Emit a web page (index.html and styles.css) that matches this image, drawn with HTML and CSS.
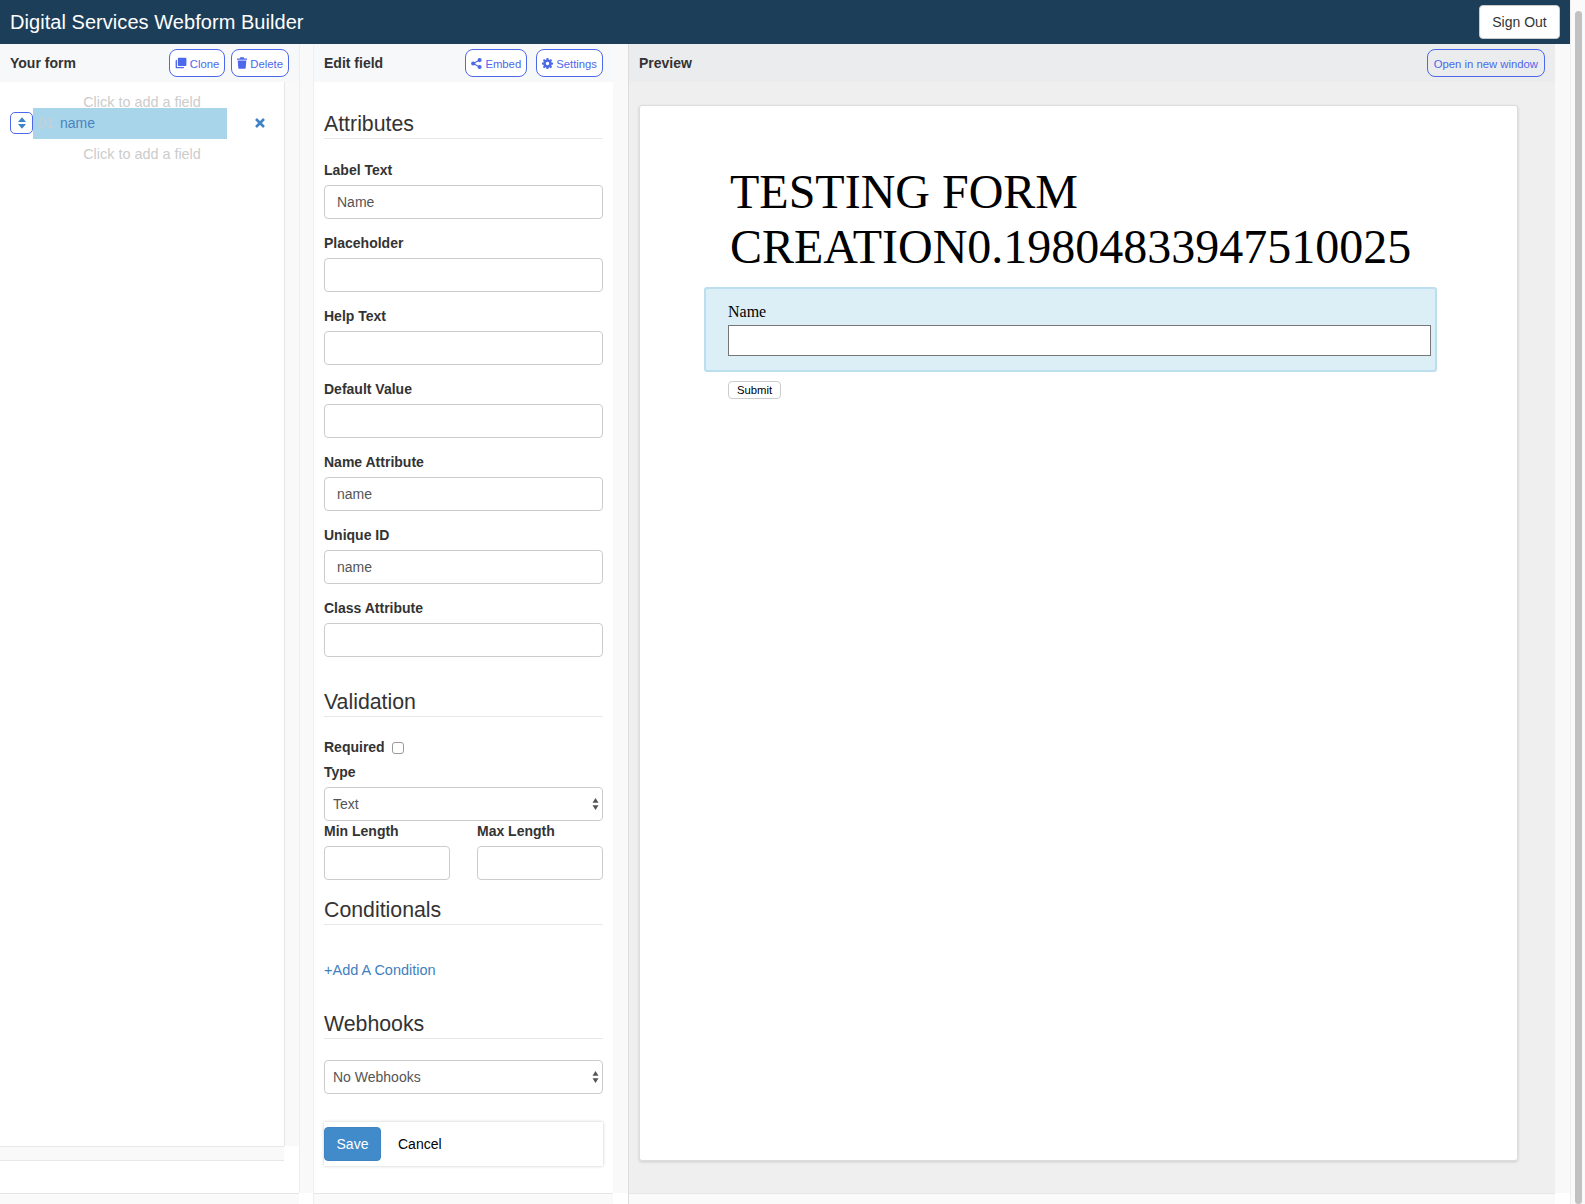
FILE: index.html
```html
<!DOCTYPE html>
<html lang="en">
<head>
<meta charset="utf-8">
<title>Digital Services Webform Builder</title>
<link rel="stylesheet" href="styles.css">
</head>
<body>
<div class="app">
  <header class="topbar">
    <div class="brand">Digital Services Webform Builder</div>
    <button class="signout">Sign Out</button>
  </header>
  <main class="workspace">
    <section class="col col-form">
      <div class="col-head">
        <span class="col-title">Your form</span>
        <div class="tools">
          <a class="pill"><svg class="ico" viewBox="0 0 16 16"><path d="M5 1h9a1.200 1.200 0 0 1 1.200 1.200v8.600A1.200 1.200 0 0 1 14 12H5a1.200 1.200 0 0 1-1.200-1.200V2.200A1.200 1.200 0 0 1 5 1z"/><path d="M2.600 4v8.200c0 .7.500 1.200 1.200 1.200H12v.6A1.200 1.200 0 0 1 10.800 15H2A1.200 1.200 0 0 1 .8 13.800V5.200A1.200 1.200 0 0 1 2 4z"/></svg>Clone</a>
          <a class="pill"><svg class="ico ico-trash" viewBox="1 0 14 16"><path d="M5.600 0h4.800l.8 1.600H15v1.800H1V1.600h3.800zM2 4.400h12l-.8 10.400a1.200 1.200 0 0 1-1.200 1.200H4a1.200 1.200 0 0 1-1.200-1.200z"/></svg>Delete</a>
        </div>
      </div>
      <div class="form-body">
        <div class="field-list">
          <div class="slot slot-top">Click to add a field</div>
          <div class="field-row">
            <button class="sort"><svg class="sort-ico" viewBox="0 0 9 13"><path d="M4.500 0L9 5.500H0zM4.500 13L0 7.500h9z"/></svg></button>
            <div class="field-chip"><span class="num">01</span><span class="fname">name</span></div>
            <svg class="remove" viewBox="0 0 12 12"><path d="M2 2l8 8M10 2l-8 8"/></svg>
          </div>
          <div class="slot slot-bottom">Click to add a field</div>
        </div>
        <div class="rail"></div>
      </div>
      <div class="strip"></div>
      <div class="blank"></div>
      <div class="col-foot"></div>
    </section>
    <div class="gutter gutter-first"><div class="gutter-fill"></div><div class="gutter-foot"></div></div>
    <section class="col col-edit">
      <div class="col-head">
        <span class="col-title">Edit field</span>
        <div class="tools tools-wide">
          <a class="pill"><svg class="ico ico-small" viewBox="0 0 16 16"><circle cx="12.500" cy="3" r="3"/><circle cx="12.500" cy="13" r="3"/><circle cx="3.200" cy="8" r="3"/><path class="ico-line" d="M12.500 3L3.200 8l9.300 5"/></svg>Embed</a>
          <a class="pill"><svg class="ico ico-small" viewBox="0 0 16 16"><path fill-rule="evenodd" d="M6.700 0h2.600l.4 2.200 1.300.6 1.900-1.300 1.800 1.800-1.300 1.900.6 1.300 2 .4v2.600l-2 .4-.6 1.300 1.300 1.900-1.800 1.800-1.900-1.300-1.300.6-.4 2H6.700l-.4-2-1.300-.6-1.900 1.300-1.800-1.800 1.300-1.900-.6-1.300-2-.4V6.900l2-.4.6-1.300-1.300-1.900 1.800-1.800L5 2.800l1.300-.6zM8 5.500a2.500 2.500 0 1 0 0 5 2.500 2.500 0 0 0 0-5z"/></svg>Settings</a>
        </div>
      </div>
      <div class="edit-body">
        <h4 class="sec sec-first">Attributes</h4>
        <div class="group"><label class="lbl">Label Text</label><input class="ctl" value="Name"></div>
        <div class="group"><label class="lbl">Placeholder</label><input class="ctl"></div>
        <div class="group"><label class="lbl">Help Text</label><input class="ctl"></div>
        <div class="group"><label class="lbl">Default Value</label><input class="ctl"></div>
        <div class="group"><label class="lbl">Name Attribute</label><input class="ctl" value="name"></div>
        <div class="group"><label class="lbl">Unique ID</label><input class="ctl" value="name"></div>
        <div class="group"><label class="lbl">Class Attribute</label><input class="ctl"></div>

        <h4 class="sec sec-validation">Validation</h4>
        <div class="req"><label class="lbl">Required</label><span class="check"></span></div>
        <label class="lbl lbl-type">Type</label>
        <div class="select-wrap">
          <select class="sel"><option>Text</option></select>
          <svg class="carets" viewBox="0 0 8 14"><path d="M4 0l3.500 5.500h-7zM4 14L.5 8.500h7z"/></svg>
        </div>
        <div class="two">
          <div><label class="lbl">Min Length</label><input class="ctl"></div>
          <div><label class="lbl">Max Length</label><input class="ctl"></div>
        </div>

        <h4 class="sec sec-cond">Conditionals</h4>
        <a class="add-cond">+Add A Condition</a>

        <h4 class="sec sec-hooks">Webhooks</h4>
        <div class="select-wrap">
          <select class="sel"><option>No Webhooks</option></select>
          <svg class="carets" viewBox="0 0 8 14"><path d="M4 0l3.500 5.500h-7zM4 14L.5 8.500h7z"/></svg>
        </div>
        <div class="actions">
          <button class="save">Save</button>
          <a class="cancel">Cancel</a>
        </div>
      </div>
      <div class="col-foot"></div>
    </section>
    <div class="gutter"><div class="gutter-fill"></div><div class="gutter-foot"></div></div>
    <section class="col col-preview">
      <div class="col-head">
        <span class="col-title">Preview</span>
        <a class="pill">Open in new window</a>
      </div>
      <div class="preview-body">
        <div class="sheet">
          <h1 class="form-title">TESTING FORM CREATION0.19804833947510025</h1>
          <div class="preview-field">
            <label class="pv-label">Name</label>
            <input class="pv-input">
          </div>
          <button class="pv-submit">Submit</button>
        </div>
      </div>
      <div class="col-foot"></div>
    </section>
    <div class="gutter"><div class="gutter-fill"></div><div class="gutter-foot"></div></div>
  </main>
</div>
<div class="scrollbar"><div class="thumb"></div></div>
</body>
</html>
```
FILE: styles.css
```css
* { box-sizing: border-box; }
html, body { margin: 0; height: 100%; }
body {
  display: flex;
  height: 1204px;
  overflow: hidden;
  background: #fff;
  font-family: "Liberation Sans", Arial, sans-serif;
  font-size: 14px;
  color: #333;
}
.app { width: 1570px; display: flex; flex-direction: column; }
.topbar {
  height: 44px;
  flex: none;
  background: #1d3e58;
  display: flex;
  align-items: center;
  justify-content: space-between;
  padding: 0 10px;
}
.brand { color: #fff; font-size: 20px; letter-spacing: .05px; }
.signout {
  width: 81px; height: 34px;
  background: #fff;
  border: 1px solid #ccc;
  border-radius: 4px;
  font: 14px "Liberation Sans", Arial, sans-serif;
  color: #333;
  padding: 0;
}
.workspace { flex: 1; display: flex; min-height: 0; }
.col { display: flex; flex-direction: column; width: 299px; flex: none; }
.col-edit { width: 300px; border-left: 1px solid #efefef; }
.col-preview { width: 927px; flex: none; border-left: 1px solid #dcdcdc; }
.col-preview .col-head { background: #ebecee; }
.col-head {
  height: 38px;
  flex: none;
  background: #f7f8fa;
  display: flex;
  align-items: center;
  justify-content: space-between;
  padding: 0 10px;
}
.col-title { font-weight: 700; font-size: 14px; color: #333; }
.tools { display: flex; gap: 6px; }
.tools-wide { gap: 9px; }
.pill {
  display: inline-flex;
  align-items: center;
  gap: 3px;
  height: 28px;
  padding: 2px 5px 0;
  border: 1px solid #4d68ea;
  border-radius: 8px;
  background: #fff;
  color: #4d68ea;
  font-size: 11.3px;
  white-space: nowrap;
}
.col-preview .pill { padding: 2px 6px 0; background: transparent; }
.ico { width: 12px; height: 12px; fill: #4d68ea; margin-top: -2px; }
.ico-trash { width: 10px; }
.ico-small { width: 11px; height: 11px; }
.ico-line { fill: none; stroke: #4d68ea; stroke-width: 1.600; }
.form-body { flex: 1; display: flex; min-height: 0; }
.field-list { width: 285px; background: #fff; border-right: 1px solid #e6e6e6; padding-top: 10px; }
.rail { flex: 1; background: #f9f9f9; }
.slot { width: 284px; text-align: center; color: #ccc; line-height: 20px; font-size: 14.4px; }
.slot-top { margin-bottom: -4px; }
.slot-bottom { margin-top: 5px; }
.field-row { display: flex; align-items: center; padding-left: 10px; height: 31px; }
.sort {
  width: 23px; height: 22px;
  margin-bottom: 2px;
  padding: 0;
  background: #fff;
  border: 1px solid #4d68ea;
  border-radius: 5px;
  display: flex; align-items: center; justify-content: center;
}
.sort-ico { width: 8px; height: 12px; fill: #3f83c6; }
.field-chip {
  width: 194px; height: 31px;
  background: #a8d5ea;
  display: flex; align-items: center;
  padding: 0 0 2px 5px;
}
.num { color: #c6cfd4; width: 22px; }
.fname { color: #4a84bf; }
.remove { width: 12px; height: 12px; margin: 0 0 2px 27px; stroke: #3f83c6; stroke-width: 2.600; fill: none; }
.strip {
  width: 284px; height: 15px; flex: none;
  background: #f9f9f9;
  border-top: 1px solid #e8e8e8;
  border-bottom: 1px solid #e8e8e8;
}
.blank { height: 32px; flex: none; background: #fff; }
.col-foot { height: 11px; flex: none; background: #fafafa; border-top: 1px solid #e6e6e6; }
.gutter { width: 15px; flex: none; display: flex; flex-direction: column; }
.gutter-first { width: 14px; }
.gutter-fill { flex: 1; background: #f9f9f9; }
.gutter-foot { height: 11px; background: #fff; }
.gutter-first .gutter-fill { border-left: 1px solid #eee; }
.edit-body { flex: 1; background: #fff; padding: 0 10px; min-height: 0; }
.sec {
  margin: 0 0 21px;
  font-size: 21.3px;
  font-weight: 400;
  line-height: 36px;
  color: #333;
  height: 33px;
  border-bottom: 1px solid #e8e8e8;
}
.sec-first { margin-top: 24px; }
.sec-validation { margin-top: 27px; margin-bottom: 20px; }
.sec-cond { margin-top: 12px; margin-bottom: 35px; }
.sec-hooks { margin-top: 26px; margin-bottom: 21px; }
.lbl { display: block; font-weight: 700; line-height: 20px; margin-bottom: 5px; color: #333; }
.group { margin-bottom: 14px; }
.ctl {
  display: block;
  width: 100%;
  height: 34px;
  padding: 0 12px;
  border: 1px solid #ccc;
  border-radius: 4px;
  background: #fff;
  color: #555;
  font: 14px "Liberation Sans", Arial, sans-serif;
}
.req { display: flex; align-items: center; gap: 7px; height: 20px; margin-bottom: 5px; }
.req .lbl { margin: 0; }
.check { width: 12px; height: 12px; border: 1px solid #9a9a9a; border-radius: 3px; background: #fff; margin-top: 2px; }
.lbl-type { margin-bottom: 5px; }
.select-wrap { position: relative; height: 34px; }
.sel {
  width: 100%; height: 34px;
  appearance: none;
  padding: 0 8px;
  border: 1px solid #ccc;
  border-radius: 4px;
  background: #fff;
  color: #555;
  font: 14px "Liberation Sans", Arial, sans-serif;
}
.carets { position: absolute; right: 4px; top: 11px; width: 7px; height: 12px; fill: #555; }
.two { display: grid; grid-template-columns: 126px 126px; justify-content: space-between; }
.add-cond { display: block; color: #3f7fbf; line-height: 20px; font-size: 14.5px; }
.actions {
  display: flex; align-items: center;
  height: 44px;
  margin: 28px 0 0;
  box-shadow: 0 0 3px rgba(0,0,0,.22);
}
.save {
  width: 57px; height: 34px;
  background: #428bca;
  border: 1px solid #3f83c0;
  border-radius: 4px;
  color: #fff;
  font: 14px "Liberation Sans", Arial, sans-serif;
  padding: 0;
}
.cancel { margin-left: 17px; color: #000; }
.preview-body { flex: 1; background: #efefef; padding: 23px 0 0 10px; min-height: 0; }
.sheet {
  width: 879px;
  height: 1056px;
  background: #fff;
  border: 1px solid #ddd;
  border-radius: 3px;
  box-shadow: 0 1px 3px rgba(0,0,0,.15);
  padding: 58px 80px 0 64px;
  font-family: "Liberation Serif", "Times New Roman", serif;
  color: #000;
}
.form-title {
  margin: 0 0 13px 26px;
  font-size: 48px;
  font-weight: 400;
  line-height: 55px;
}
.preview-field {
  height: 85px;
  background: #dceef6;
  border: 2px solid #bcdff0;
  border-radius: 3px;
  padding: 13px 4px 0 22px;
}
.pv-label { display: block; font-size: 16px; line-height: 20px; margin-bottom: 3px; }
.pv-input { display: block; width: 100%; height: 31px; border: 1px solid #767676; background: #fff; padding: 0; }
.pv-submit {
  display: block;
  margin: 9px 0 0 24px;
  width: 53px; height: 18px;
  padding: 0;
  background: #fff;
  border: 1px solid #ccc;
  border-radius: 4px;
  font: 11.300px "Liberation Sans", Arial, sans-serif;
  color: #000;
}
.scrollbar { width: 15px; flex: none; background: #fafafa; padding: 11px 3px 0 4px; border-left: 1px solid #eee; }
.thumb { height: 1193px; background: #c1c1c1; border-radius: 4px; }
```
